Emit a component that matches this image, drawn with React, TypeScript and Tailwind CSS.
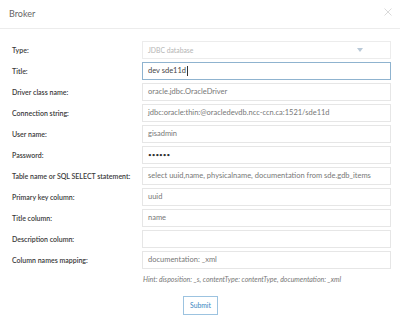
const rows: { label: string; value: string; kind?: "select" | "focus" | "password" }[] = [
  { label: "Type:", value: "JDBC database", kind: "select" },
  { label: "Title:", value: "dev sde11d", kind: "focus" },
  { label: "Driver class name:", value: "oracle.jdbc.OracleDriver" },
  { label: "Connection string:", value: "jdbc:oracle:thin:@oracledevdb.ncc-ccn.ca:1521/sde11d" },
  { label: "User name:", value: "gisadmin" },
  { label: "Password:", value: "••••••", kind: "password" },
  { label: "Table name or SQL SELECT statement:", value: "select uuid,name, physicalname, documentation from sde.gdb_items" },
  { label: "Primary key column:", value: "uuid" },
  { label: "Title column:", value: "name" },
  { label: "Description column:", value: "" },
  { label: "Column names mapping:", value: "documentation: _xml" },
];

function Field({ value, kind }: { value: string; kind?: string }) {
  if (kind === "select") {
    return (
      <div className="flex h-[18px] w-[249px] items-center justify-between border border-[#ececec] bg-white pl-[5px] pr-[27px] text-[6.8px] text-[#b5b5b5]">
        <span>{value}</span>
        <svg width="6" height="4" viewBox="0 0 6 4">
          <path d="M0 0 L6 0 L3 4 Z" fill="#b9c9d8" />
        </svg>
      </div>
    );
  }
  if (kind === "focus") {
    return (
      <div className="flex h-[18px] w-[249px] items-center border border-[#8fb3cf] bg-white pl-[5px] text-[#444]">
        <span>{value}</span>
        <span className="ml-[1px] h-[10px] w-px bg-[#333]" />
      </div>
    );
  }
  return (
    <div
      className={
        "flex h-[18px] w-[249px] items-center border border-[#e6e6e6] bg-white pl-[5px] " +
        (kind === "password" ? "text-[6.4px] text-[#333]" : "text-[#777]")
      }
    >
      <span>{value}</span>
    </div>
  );
}

export default function App() {
  return (
    <div className="h-[317px] w-[400px] bg-white font-['Lato',sans-serif]">
      <div className="flex h-[29px] items-center justify-between border-b border-[#ececec] pl-[9px] pr-[8px]">
        <span className="text-[9px] text-[#666]">Broker</span>
        <svg width="8" height="8" viewBox="0 0 8 8" className="mb-[4px]">
          <path d="M0.5 0.5 L7.5 7.5 M7.5 0.5 L0.5 7.5" stroke="#d0d0d0" strokeWidth="0.8" />
        </svg>
      </div>
      <div className="flex flex-col gap-[3px] pt-[12px] text-[7.5px]">
        {rows.map((r) => (
          <div key={r.label} className="flex items-center">
            <div className="w-[142px] pl-[12px] text-[7px] font-semibold text-[#3a3a3a]">{r.label}</div>
            <Field value={r.value} kind={r.kind} />
          </div>
        ))}
        <div className="pl-[143px] pt-[2px] text-[7px] italic text-[#777]">
          Hint: disposition: _s, contentType: contentType, documentation: _xml
        </div>
      </div>
      <div className="flex justify-center pt-[11px] pl-[1px]">
        <div className="flex h-[19px] w-[35px] items-center justify-center border border-[#9cc3e0] text-[6.8px] text-[#3a86c2]">
          Submit
        </div>
      </div>
    </div>
  );
}
